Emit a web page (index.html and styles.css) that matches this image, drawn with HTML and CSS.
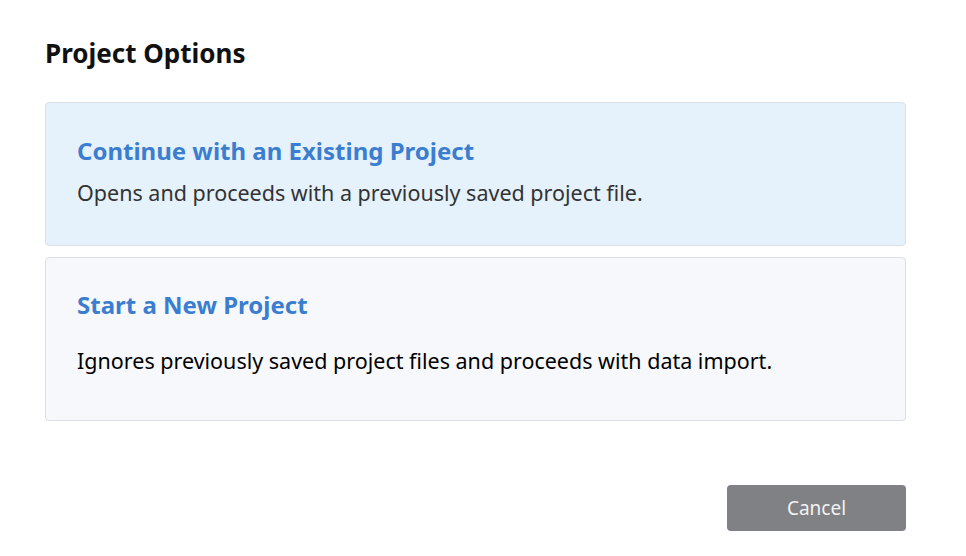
FILE: index.html
```html
<!DOCTYPE html>
<html>
<head>
<meta charset="utf-8">
<link rel="stylesheet" href="styles.css">
</head>
<body>
<div class="dialog">
  <h1 class="title">Project Options</h1>
  <div class="options">
    <div class="option option-active">
      <div class="option-title">Continue with an Existing Project</div>
      <div class="option-desc">Opens and proceeds with a previously saved project file.</div>
    </div>
    <div class="option option-new">
      <div class="option-title">Start a New Project</div>
      <div class="option-desc option-desc-dark">Ignores previously saved project files and proceeds with data import.</div>
    </div>
  </div>
  <div class="actions">
    <button class="btn-cancel">Cancel</button>
  </div>
</div>
</body>
</html>
```
FILE: styles.css
```css
html, body {
  margin: 0;
  padding: 0;
  background: #ffffff;
}
body {
  font-family: "Noto Sans", "Open Sans", sans-serif;
}
.dialog {
  padding: 37px 60px 0 45px;
}
.title {
  margin: 0 0 33px 0;
  font-size: 26px;
  line-height: 32px;
  font-weight: 700;
  color: #111111;
}
.options {
  display: flex;
  flex-direction: column;
  gap: 11px;
}
.option {
  border: 1px solid #dcdfe4;
  border-radius: 4px;
  padding: 0 31px;
  display: flex;
  flex-direction: column;
}
.option-active {
  background: #e5f1fb;
  padding-top: 33px;
  padding-bottom: 38px;
  gap: 13px;
}
.option-new {
  background: #f7f8fc;
  padding-top: 32px;
  padding-bottom: 45px;
  gap: 27px;
}
.option-title {
  font-size: 24px;
  line-height: 30px;
  font-weight: 700;
  color: #3b7ed0;
}
.option-desc {
  font-size: 21.5px;
  line-height: 28px;
  color: #333333;
}
.option-desc-dark {
  color: #000000;
}
.actions {
  display: flex;
  justify-content: flex-end;
  margin-top: 64px;
}
.btn-cancel {
  width: 179px;
  height: 46px;
  border: none;
  border-radius: 4px;
  background: #808184;
  color: #f2f2f2;
  font-family: "Noto Sans", "Open Sans", sans-serif;
  font-size: 19px;
  padding: 0;
}
```
